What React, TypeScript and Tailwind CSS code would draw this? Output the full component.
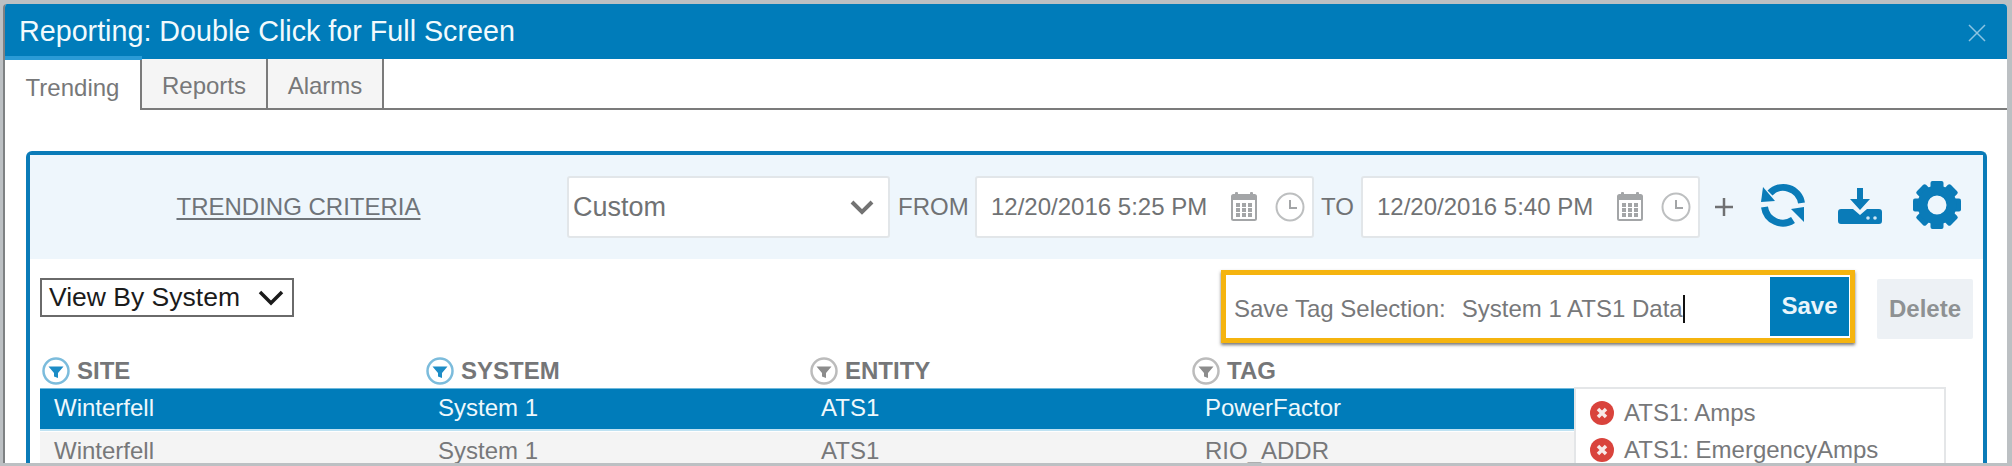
const font = { fontFamily: '"Liberation Sans", Arial, sans-serif' }

function CalendarIcon() {
  return (
    <svg width="26" height="30" viewBox="0 0 26 30" className="shrink-0">
      <rect x="1" y="3" width="24" height="25" rx="1.5" fill="none" stroke="#a3a5a7" strokeWidth="2" />
      <rect x="1" y="3" width="24" height="5" fill="#a3a5a7" />
      <rect x="4" y="0" width="3" height="5" rx="1" fill="#a3a5a7" />
      <rect x="19" y="0" width="3" height="5" rx="1" fill="#a3a5a7" />
      {[11, 16, 21].map(y =>
        [5, 11, 17].map(x => <rect key={`${x}-${y}`} x={x} y={y} width="4" height="4" fill="#a3a5a7" />)
      )}
    </svg>
  )
}

function ClockIcon() {
  return (
    <svg width="30" height="30" viewBox="0 0 30 30" className="shrink-0">
      <circle cx="15" cy="15" r="13.5" fill="none" stroke="#bdbfc0" strokeWidth="2" />
      <path d="M15 8v8h7" fill="none" stroke="#a3a5a7" strokeWidth="2" />
    </svg>
  )
}

function DateField({ value }: { value: string }) {
  return (
    <div className="flex h-[62px] w-[339px] shrink-0 items-center rounded-[3px] border-2 border-[#e2e6e9] bg-white pl-[14px]">
      <span className="w-[240px] text-[24px] text-[#707274]">{value}</span>
      <CalendarIcon />
      <span className="ml-[18px]">
        <ClockIcon />
      </span>
    </div>
  )
}

function RefreshIcon() {
  return (
    <svg width="44" height="46" viewBox="0 0 44 46" className="shrink-0">
      <path d="M9 11A18.500 18.500 0 0 1 40.500 21" fill="none" stroke="#0a7bb8" strokeWidth="7" />
      <path d="M3.500 25A18.500 18.500 0 0 0 32 38" fill="none" stroke="#0a7bb8" strokeWidth="7" />
      <path d="M2 5L0 20l14-1z" fill="#0a7bb8" />
      <path d="M43 25l0 15-13-13z" fill="#0a7bb8" />
    </svg>
  )
}

function DownloadIcon() {
  return (
    <svg width="44" height="36" viewBox="0 0 44 36" className="shrink-0">
      <path d="M19 0h6v11h7L22 22 12 11h7z" fill="#0a7bb8" />
      <path d="M3 21h12l7 6 7-6h12a3 3 0 0 1 3 3v9a3 3 0 0 1-3 3H3a3 3 0 0 1-3-3v-9a3 3 0 0 1 3-3z" fill="#0a7bb8" />
      <circle cx="30" cy="30" r="1.8" fill="#cfe6f4" />
      <circle cx="37" cy="30" r="1.8" fill="#cfe6f4" />
    </svg>
  )
}

function GearIcon() {
  const teeth = [0, 45, 90, 135, 180, 225, 270, 315]
  return (
    <svg width="48" height="48" viewBox="0 0 48 48" className="shrink-0">
      {teeth.map(a => (
        <rect key={a} x="17.500" y="0" width="13" height="12" rx="2" fill="#0a7bb8" transform={`rotate(${a} 24 24)`} />
      ))}
      <circle cx="24" cy="24" r="14.500" fill="none" stroke="#0a7bb8" strokeWidth="10" />
    </svg>
  )
}

function FilterIcon({ active }: { active: boolean }) {
  return (
    <svg width="28" height="28" viewBox="0 0 28 28" className="shrink-0">
      <circle cx="14" cy="14" r="12.500" fill="white" stroke={active ? "#7cbcdc" : "#bcbcbc"} strokeWidth="2.500" />
      <path d="M6.500 9.500h15l-5.500 6.500v5l-4-1.500v-3.500z" fill={active ? "#1c8cc6" : "#8c8c8c"} />
    </svg>
  )
}

function RemoveIcon() {
  return (
    <svg width="24" height="24" viewBox="0 0 24 24" className="shrink-0">
      <circle cx="12" cy="12" r="12" fill="#d9433c" />
      <path d="M8 8l8 8M16 8l-8 8" stroke="#f8e9e8" strokeWidth="3.500" />
    </svg>
  )
}

function HeaderCell({ label, active, width }: { label: string; active: boolean; width: string }) {
  return (
    <div className={`flex items-center gap-[7px] pl-[2px] ${width}`}>
      <FilterIcon active={active} />
      <span className="text-[24px] font-bold text-[#757678]">{label}</span>
    </div>
  )
}

const rows = [
  ["Winterfell", "System 1", "ATS1", "PowerFactor"],
  ["Winterfell", "System 1", "ATS1", "RIO_ADDR"],
]

export default function App() {
  return (
    <div className="h-[466px] w-[2012px] overflow-hidden bg-[#bcc0c3] pl-[3px] pr-[5px] pt-[4px]" style={font}>
      <div className="h-[459px] overflow-hidden rounded-t-[4px] border-l-2 border-[#7e8183] bg-white">
        {/* Title bar */}
        <div className="flex h-[55px] items-center justify-between bg-[#007cba] pl-[14px] pr-[21px]">
          <span className="text-[28.7px] text-[#f2fafd]">Reporting: Double Click for Full Screen</span>
          <svg width="18" height="18" viewBox="0 0 18 18" className="mt-[3px]">
            <path d="M1 1l16 16M17 1L1 17" stroke="#8cc4e2" strokeWidth="1.500" />
          </svg>
        </div>

        {/* Tabs */}
        <div className="flex h-[51px] border-b-2 border-[#7b7b7b] text-[24px] text-[#777879]">
          <div className="relative -mb-[2px] flex w-[137px] items-start justify-center border-r-2 border-[#7b7b7b] bg-white pt-[11px]">
            <span className="absolute -top-[3px] left-0 h-[4px] w-[137px] bg-[#2a9bd6]" />
            Trending
          </div>
          <div className="flex w-[126px] justify-center border-r-2 border-[#7b7b7b] bg-[#f5f5f5] pt-[9px]">Reports</div>
          <div className="flex w-[116px] justify-center border-r-2 border-[#7b7b7b] bg-[#f5f5f5] pt-[9px]">Alarms</div>
        </div>

        {/* Trending panel */}
        <div className="ml-[21px] mr-[20px] mt-[41px] h-[400px] rounded-t-[6px] border-x-4 border-t-4 border-[#0a7bb8]">
          <div className="flex h-[104px] items-center bg-[#eef6fc]">
            <div className="w-[537px] shrink-0 text-center text-[24px] text-[#6f7479] underline underline-offset-[3px]">
              TRENDING CRITERIA
            </div>
            <div className="flex h-[62px] w-[323px] shrink-0 items-center justify-between rounded-[3px] border-2 border-[#e2e6e9] bg-white pl-[4px] pr-[14px] text-[27px] text-[#707274]">
              Custom
              <svg width="24" height="16" viewBox="0 0 24 16">
                <path d="M2 3l10 10L22 3" fill="none" stroke="#737373" strokeWidth="4" />
              </svg>
            </div>
            <span className="ml-[8px] w-[77px] shrink-0 text-[24px] text-[#707274]">FROM</span>
            <DateField value="12/20/2016 5:25 PM" />
            <span className="ml-[7px] w-[40px] shrink-0 text-[24px] text-[#707274]">TO</span>
            <DateField value="12/20/2016 5:40 PM" />
            <svg width="18" height="18" viewBox="0 0 18 18" className="ml-[15px] shrink-0">
              <path d="M9 0v18M0 9h18" stroke="#6f7072" strokeWidth="2.500" />
            </svg>
            <span className="ml-[28px] -mt-[4px]">
              <RefreshIcon />
            </span>
            <span className="ml-[33px] -mt-[3px]">
              <DownloadIcon />
            </span>
            <span className="ml-[31px] -mt-[4px]">
              <GearIcon />
            </span>
          </div>

          {/* Tag selection toolbar */}
          <div className="flex h-[94px] items-start justify-between pl-[10px] pr-[10px] pt-[11px]">
            <div className="mt-[8px] flex h-[39px] w-[254px] items-center justify-between border-2 border-[#6a6a6a] pl-[7px] pr-[8px] text-[26.5px] text-[#1b1b1b]">
              View By System
              <svg width="26" height="16" viewBox="0 0 26 16">
                <path d="M2 2l11 11L24 2" fill="none" stroke="#1b1b1b" strokeWidth="3.500" />
              </svg>
            </div>
            <div className="flex items-start gap-[22px]">
              <div className="flex h-[73px] w-[634px] items-center justify-between border-[5px] border-[#f5b40f] bg-white pl-[8px] pr-[1px] shadow-[0_2px_3px_rgba(60,60,60,0.7)]">
                <div className="mt-[4px] flex items-center text-[#77787a]">
                  <span className="text-[24px]">Save Tag Selection:</span>
                  <span className="ml-[16px] text-[24px]">System 1 ATS1 Data</span>
                  <span className="h-[28px] w-[2px] bg-[#111]" />
                </div>
                <div className="flex h-[59px] w-[79px] items-center justify-center bg-[#007cba] pb-[2px] text-[24px] font-bold text-[#eaf5fb]">
                  Save
                </div>
              </div>
              <div className="mt-[9px] flex h-[60px] w-[96px] items-center justify-center rounded-[2px] bg-[#edf1f5] text-[24px] font-bold text-[#8e9193]">
                Delete
              </div>
            </div>
          </div>

          {/* Tag grid */}
          <div className="pl-[10px]">
            <div className="flex h-[34px] items-start">
              <HeaderCell label="SITE" active={true} width="w-[384px]" />
              <HeaderCell label="SYSTEM" active={true} width="w-[384px]" />
              <HeaderCell label="ENTITY" active={false} width="w-[382px]" />
              <HeaderCell label="TAG" active={false} width="w-[200px]" />
            </div>
            <div className="flex">
              <div className="mt-[2px] w-[1534px]">
                {rows.map((row, i) => (
                  <div
                    key={row[3]}
                    className={
                      i === 0
                        ? "flex h-[40px] items-center bg-[#007cba] pb-[2px] text-[24px] text-[#eef8fc] shadow-[0_-1px_0_#6fb9dc,0_2px_0_#bfe2f2]"
                        : "mt-[3px] flex h-[37px] items-center bg-[#f4f4f4] text-[24px] text-[#77787a]"
                    }
                  >
                    <span className="w-[384px] pl-[14px]">{row[0]}</span>
                    <span className="w-[383px] pl-[14px]">{row[1]}</span>
                    <span className="w-[384px] pl-[14px]">{row[2]}</span>
                    <span className="pl-[14px]">{row[3]}</span>
                  </div>
                ))}
              </div>
              <div className="w-[372px] border-x-2 border-t-2 border-[#e4e6e8] pl-[14px] pt-[5px] text-[24px] text-[#77787a]">
                <div className="flex h-[37px] items-center gap-[10px]">
                  <RemoveIcon />
                  ATS1: Amps
                </div>
                <div className="flex h-[37px] items-center gap-[10px]">
                  <RemoveIcon />
                  ATS1: EmergencyAmps
                </div>
              </div>
            </div>
          </div>
        </div>
      </div>
    </div>
  )
}
